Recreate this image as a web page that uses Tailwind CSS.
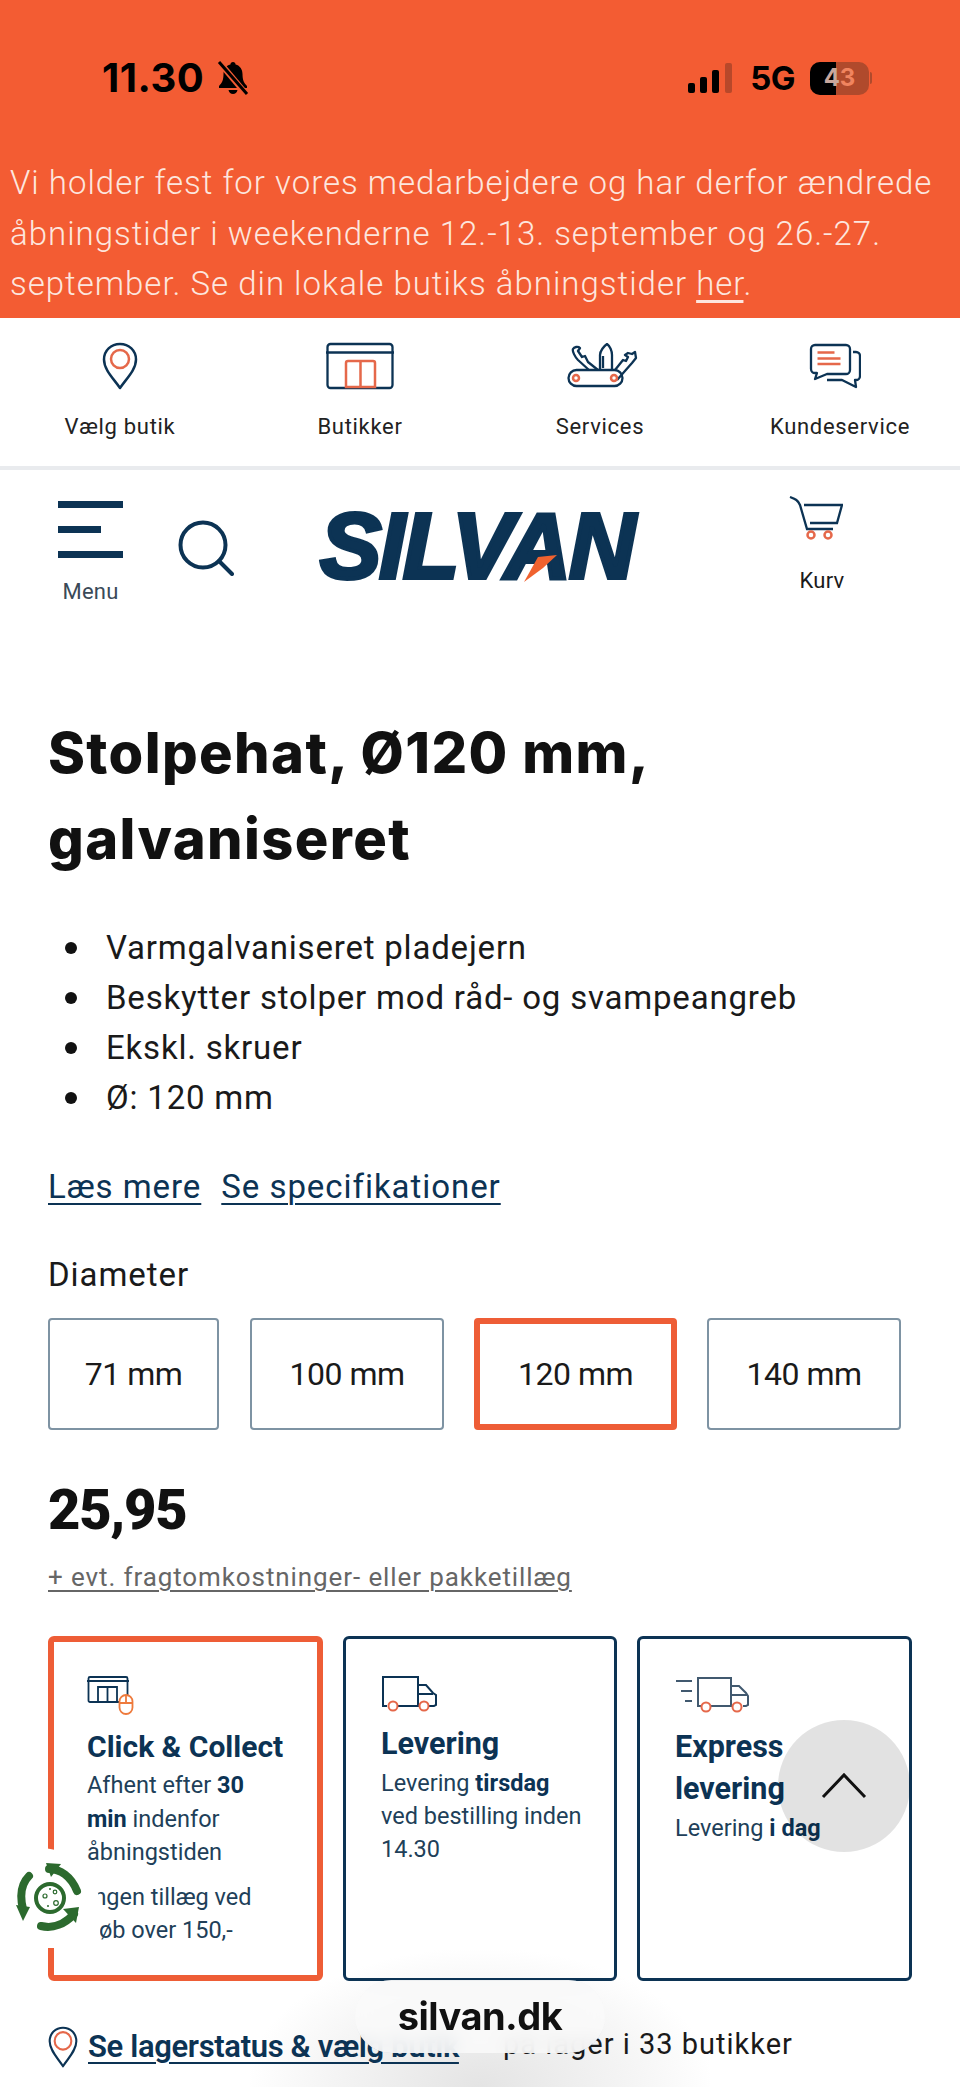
<!DOCTYPE html>
<html lang="da">
<head>
<meta charset="utf-8">
<script src="https://cdn.jsdelivr.net/npm/@tailwindcss/browser@4"></script>
</head>
<body class="bg-white">
<div class="relative w-[960px] h-[2087px] overflow-hidden bg-white font-['Roboto',sans-serif] text-[#1a1a1a]">

  <!-- soft glow behind address pill -->
  <div class="absolute left-[250px] top-[1950px] w-[460px] h-[137px] bg-[radial-gradient(ellipse_at_50%_100%,#e4e4e4_0%,#f4f4f4_45%,#ffffff00_72%)]"></div>

  <!-- orange top -->
  <div class="relative h-[318px] bg-[#f35c33] flex flex-col">
    <div class="mt-[56px] h-[44px] flex items-center pl-[102px] pr-[88px] text-black font-['Inter',sans-serif]">
      <span class="text-[40px] font-bold tracking-[0.5px] leading-none">11.30</span>
      <svg class="ml-[12px]" width="34" height="36" viewBox="0 0 34 36"><path d="M17 2c-1.600 0-2.500 1-2.600 2.400C9.800 5.600 7.500 9.500 7.500 14c0 6-1.500 9-4.500 12v2h28v-2c-3-3-4.500-6-4.500-12 0-4.500-2.300-8.400-6.900-9.600C19.500 3 18.600 2 17 2zM12.500 30c.5 2.500 2.300 4 4.500 4s4-1.500 4.500-4z" fill="#000"/><path d="M4 3l26 31" stroke="#f35c33" stroke-width="6"/><path d="M3 2l28 32" stroke="#000" stroke-width="3"/></svg>
      <div class="ml-auto flex items-center">
        <svg width="44" height="30" viewBox="0 0 44 30"><rect x="0" y="20" width="7" height="10" rx="2" fill="#000"/><rect x="12" y="14" width="7" height="16" rx="2" fill="#000"/><rect x="24" y="7" width="7" height="23" rx="2" fill="#000"/><rect x="37" y="0" width="7" height="30" rx="2" fill="#b8482a"/></svg>
        <span class="ml-[18px] text-[33px] font-bold tracking-[-0.5px] leading-none">5G</span>
        <div class="ml-[15px] relative w-[59px] h-[33px] rounded-[10px] bg-[#b04a2c] overflow-hidden flex items-center justify-center">
          <div class="absolute left-0 top-0 bottom-0 w-[26px] bg-black"></div>
          <span class="relative text-[24px] font-bold leading-none text-[#f0845f]"><span class="text-[#c9a79c]">4</span>3</span>
        </div>
        <div class="ml-[1px] w-[2px] h-[12px] rounded-r bg-[#b04a2c]"></div>
      </div>
    </div>
    <p class="mt-[58px] pl-[10px] text-[33px] font-light leading-[50.5px] tracking-[1px] text-[#fde6de] whitespace-nowrap">Vi holder fest for vores medarbejdere og har derfor ændrede<br>åbningstider i weekenderne 12.-13. september og 26.-27.<br>september. Se din lokale butiks åbningstider <a class="underline underline-offset-[5px]">her</a>.</p>
  </div>

  <!-- service nav -->
  <nav class="relative h-[148px] grid grid-cols-4 text-[22px] text-[#222] tracking-[0.7px] bg-white">
    <a class="flex flex-col items-center pt-[23px]">
      <div class="h-[50px] flex items-center">
        <svg width="36" height="48" viewBox="0 0 36 48" fill="none"><path d="M18 46C12 37 2 28 2 17.500C2 8.500 9 2 18 2s16 6.500 16 15.500C34 28 24 37 18 46z" stroke="#0c3354" stroke-width="2.500" stroke-linejoin="round"/><circle cx="18" cy="17" r="9" stroke="#e5684a" stroke-width="2.500"/></svg>
      </div>
      <span class="mt-[22px] leading-[28px]">Vælg butik</span>
    </a>
    <a class="flex flex-col items-center pt-[23px]">
      <div class="h-[50px] flex items-center">
        <svg width="70" height="48" viewBox="0 0 70 48" fill="none"><rect x="2.500" y="2" width="65" height="44" rx="3" stroke="#0c3354" stroke-width="2.300"/><path d="M1 10.500h68" stroke="#0c3354" stroke-width="2.300"/><path d="M21 45V21a2 2 0 0 1 2-2h25a2 2 0 0 1 2 2v24zM35.500 19v26" stroke="#e5684a" stroke-width="2.500"/></svg>
      </div>
      <span class="mt-[22px] leading-[28px]">Butikker</span>
    </a>
    <a class="flex flex-col items-center pt-[23px]">
      <div class="h-[50px] flex items-center ml-[6px]">
        <svg width="72" height="46" viewBox="0 0 72 46" fill="none" stroke="#0c3354" stroke-width="2.300" stroke-linejoin="round"><rect x="1.500" y="27" width="54" height="16" rx="8"/><path d="M31 27L21 19l-3-6-3 1-4-6 2-3c-2-2-6-1-7 1s2 8 5 11l11 10M33 27V12c0-4 4-9 7-11 3 2 5 7 5 11v15M36 13v12M48 27l8-10 3 1 2-4-3-2 3-2 4 1 3-2 1 6-4 5-15 17"/><circle cx="9" cy="35" r="3" stroke="#e5684a" stroke-width="2.500"/><circle cx="47" cy="35" r="3" stroke="#e5684a" stroke-width="2.500"/></svg>
      </div>
      <span class="mt-[22px] leading-[28px]">Services</span>
    </a>
    <a class="flex flex-col items-center pt-[23px]">
      <div class="h-[50px] flex items-center mr-[10px]">
        <svg width="52" height="46" viewBox="0 0 52 46" fill="none"><path d="M6 2h31a4 4 0 0 1 4 4v21a4 4 0 0 1-4 4H18L6 36l2-6H6a4 4 0 0 1-4-4V6a4 4 0 0 1 4-4z" stroke="#0c3354" stroke-width="2.300" stroke-linejoin="round"/><path d="M44 9h3a4 4 0 0 1 4 4v20a4 4 0 0 1-4 4h-1l1 7-14-7H18" stroke="#0c3354" stroke-width="2.300" stroke-linejoin="round"/><path d="M8.500 9.500h17M8.500 15.500h23M8.500 21h23" stroke="#e5684a" stroke-width="2.300"/></svg>
      </div>
      <span class="mt-[22px] leading-[28px]">Kundeservice</span>
    </a>
  </nav>
  <div class="relative h-[4px] bg-[#e9ebee]"></div>

  <!-- header -->
  <header class="relative h-[240px] flex items-start">
    <div class="ml-[58px] w-[65px] flex flex-col items-center pt-[31px]">
      <div class="w-[65px] flex flex-col gap-[18px]">
        <div class="h-[7px] bg-[#0c3354]"></div>
        <div class="h-[7px] w-[43px] bg-[#0c3354]"></div>
        <div class="h-[7px] bg-[#0c3354]"></div>
      </div>
      <span class="mt-[20px] text-[22px] leading-[28px] text-[#3a4a58] tracking-[0.2px]">Menu</span>
    </div>
    <svg class="ml-[55px] mt-[50px]" width="56" height="56" viewBox="0 0 56 56" fill="none" stroke="#0c3354" stroke-width="4"><circle cx="25" cy="25" r="22.500"/><path d="M41 41l13 13" stroke-linecap="round" stroke-width="4"/></svg>
    <div class="relative ml-[86px] mt-[36px] w-[325px] h-[80px] flex items-center whitespace-nowrap">
      <span class="font-['Liberation_Sans',sans-serif] italic font-bold text-[92px] leading-none tracking-[-2px] text-[#0c3354] [-webkit-text-stroke:4px_#0c3354]">SILVAN</span>
      <svg class="absolute left-[202px] top-[49px]" width="36" height="28" viewBox="0 0 36 28"><path d="M16 2L35 0 21 13 2 27z" fill="#f0622f"/></svg>
    </div>
    <div class="ml-[150px] w-[54px] flex flex-col items-center pt-[26px]">
      <svg class="mr-[12px]" width="54" height="46" viewBox="0 0 54 46" fill="none"><path d="M1 1c5 2 8 3 10 8l7 24h26" stroke="#0c3354" stroke-width="2.300"/><path d="M15 9h38l-5 18H21" stroke="#0c3354" stroke-width="2.300"/><circle cx="22" cy="39" r="3.500" stroke="#e5684a" stroke-width="2.500"/><circle cx="39" cy="39" r="3.500" stroke="#e5684a" stroke-width="2.500"/></svg>
      <span class="mt-[25px] text-[22px] leading-[28px] tracking-[0.2px]">Kurv</span>
    </div>
  </header>

  <!-- main -->
  <main class="relative px-[48px]">
    <h1 class="font-['Inter',sans-serif] font-extrabold text-[56px] leading-[86px] text-[#111] tracking-[1.4px]">Stolpehat, Ø120 mm,<br>galvaniseret</h1>
    <ul class="mt-[41px] text-[33px] leading-[50px] tracking-[0.8px]">
      <li class="flex items-center"><span class="ml-[17px] mr-[29px] w-[12px] h-[12px] rounded-full bg-[#111]"></span>Varmgalvaniseret pladejern</li>
      <li class="flex items-center"><span class="ml-[17px] mr-[29px] w-[12px] h-[12px] rounded-full bg-[#111]"></span>Beskytter stolper mod råd- og svampeangreb</li>
      <li class="flex items-center"><span class="ml-[17px] mr-[29px] w-[12px] h-[12px] rounded-full bg-[#111]"></span>Ekskl. skruer</li>
      <li class="flex items-center"><span class="ml-[17px] mr-[29px] w-[12px] h-[12px] rounded-full bg-[#111]"></span>Ø: 120 mm</li>
    </ul>
    <div class="mt-[39px] flex gap-[20px] text-[33px] leading-[50px] tracking-[0.95px] text-[#0c3354]">
      <a class="underline underline-offset-[5px] decoration-2">Læs mere</a>
      <a class="underline underline-offset-[5px] decoration-2">Se specifikationer</a>
    </div>
    <div class="mt-[38px] text-[33px] leading-[50px] tracking-[0.95px]">Diameter</div>
    <div class="mt-[18px] flex text-[32px] tracking-[-0.5px]">
      <button class="w-[171px] h-[112px] border-2 border-[#7e93a3] rounded-[4px]">71 mm</button>
      <button class="ml-[31px] w-[194px] h-[112px] border-2 border-[#7e93a3] rounded-[4px]">100 mm</button>
      <button class="ml-[30px] w-[203px] h-[112px] border-[6px] border-[#ee5d36] rounded-[4px]">120 mm</button>
      <button class="ml-[30px] w-[194px] h-[112px] border-2 border-[#7e93a3] rounded-[4px]">140 mm</button>
    </div>
    <div class="mt-[50px] font-black text-[56px] leading-[60px] text-[#111] tracking-[-1.3px]">25,95</div>
    <a class="block mt-[17px] text-[26px] leading-[40px] tracking-[0.9px] text-[#666] underline underline-offset-[4px] decoration-2">+ evt. fragtomkostninger- eller pakketillæg</a>

    <div class="mt-[39px] flex gap-[20px] h-[345px] text-[#0c3354]">
      <div class="w-[275px] shrink-0 border-[6px] border-[#ee5d36] rounded-[6px] pl-[33px] pt-[33px]">
        <svg width="48" height="40" viewBox="0 0 48 40" fill="none"><rect x="1.500" y="2" width="39" height="25" rx="1.500" stroke="#0c3354" stroke-width="1.800"/><path d="M0 6h42" stroke="#0c3354" stroke-width="1.800"/><path d="M11 27V12h19v15M20.500 12v15" stroke="#0c3354" stroke-width="1.800"/><rect x="32.500" y="20" width="13" height="19" rx="6.500" fill="#fff" stroke="#ee7a3c" stroke-width="1.800"/><path d="M32.500 28h13M39 20v8" stroke="#ee7a3c" stroke-width="1.800"/></svg>
        <div class="mt-[12px] font-bold text-[30px] leading-[40px]">Click &amp; Collect</div>
        <p class="mt-[2px] text-[23.500px] leading-[33.500px] text-[#213f59]">Afhent efter <b class="text-[#0c3354]">30</b><br><b class="text-[#0c3354]">min</b> indenfor<br>åbningstiden</p>
        <p class="mt-[11px] text-[23.500px] leading-[33px] text-[#213f59]">Ingen tillæg ved<br>køb over 150,-</p>
      </div>
      <div class="w-[274px] shrink-0 border-[3px] border-[#0c3354] rounded-[6px] pl-[35px] pt-[36px]">
        <svg width="56" height="38" viewBox="0 0 56 38" fill="none"><path d="M6 31H2V2h35v29H16M24 31h13" stroke="#0c3354" stroke-width="2"/><path d="M37 10h8l7 8 3 2v10l-2 1h-6M37 19h15" stroke="#0c3354" stroke-width="2"/><circle cx="12" cy="31" r="4.500" stroke="#e5684a" stroke-width="2"/><circle cx="43" cy="31" r="4.500" stroke="#e5684a" stroke-width="2"/></svg>
        <div class="mt-[11px] font-bold text-[30.500px] leading-[40px]">Levering</div>
        <p class="mt-[3px] text-[23.500px] leading-[33px] text-[#213f59]">Levering <b class="text-[#0c3354]">tirsdag</b><br>ved bestilling inden<br>14.30</p>
      </div>
      <div class="w-[275px] shrink-0 border-[3px] border-[#0c3354] rounded-[6px] pl-[35px] pt-[38px]">
        <svg width="74" height="36" viewBox="0 0 74 36" fill="none"><path d="M1 4h16M6 14h11M10 24h7" stroke="#41596f" stroke-width="2"/><path d="M26 29h-3V1h33v28H36M56 9h8l7 7 2 3v9l-2 1h-3M56 18h16" stroke="#41596f" stroke-width="2"/><circle cx="31" cy="30" r="4.500" stroke="#e5684a" stroke-width="2"/><circle cx="62" cy="30" r="4.500" stroke="#e5684a" stroke-width="2"/></svg>
        <div class="mt-[13px] font-bold text-[30.500px] leading-[42px]">Express<br>levering</div>
        <p class="mt-[2px] text-[23.500px] leading-[33px] text-[#213f59]">Levering <b class="text-[#0c3354]">i dag</b></p>
      </div>
    </div>

    <div class="mt-[44px] flex items-center text-[31px] leading-[44px] whitespace-nowrap">
      <svg width="30" height="42" viewBox="0 0 36 48" fill="none" preserveAspectRatio="none"><path d="M18 46C12 37 2 28 2 17.500C2 8.500 9 2 18 2s16 6.500 16 15.500C34 28 24 37 18 46z" stroke="#0c3354" stroke-width="2.500" stroke-linejoin="round"/><circle cx="18" cy="17" r="10" stroke="#e5684a" stroke-width="2.500"/></svg>
      <a class="ml-[10px] w-[372px] font-semibold tracking-[-0.35px] text-[#0c3354] underline underline-offset-[5px] decoration-2">Se lagerstatus &amp; vælg butik</a>
      <span class="ml-[43px] -mt-[6px] text-[29px] tracking-[1px]">på lager i 33 butikker</span>
    </div>
  </main>

  <!-- floating: scroll to top -->
  <div class="absolute left-[778px] top-[1720px] w-[132px] h-[132px] rounded-full bg-black/[0.115] flex items-center justify-center">
    <svg width="46" height="28" viewBox="0 0 46 28" fill="none"><path d="M2 25L23 3l21 22" stroke="#111" stroke-width="3"/></svg>
  </div>

  <!-- floating: green badge -->
  <div class="absolute left-0 top-[1848px] w-[100px] h-[100px] rounded-tr-[60px] rounded-br-[12px] bg-white flex items-center justify-center">
    <svg width="68" height="70" viewBox="0 0 68 70" fill="none">
      <circle cx="34" cy="35" r="14" stroke="#2c6a2e" stroke-width="4"/>
      <circle cx="29" cy="33" r="2" stroke="#2c6a2e" stroke-width="1.200"/><circle cx="39" cy="29" r="1.800" stroke="#2c6a2e" stroke-width="1.200"/><circle cx="40" cy="40" r="2.300" stroke="#2c6a2e" stroke-width="1.200"/><circle cx="32" cy="43" r="1" fill="#2c6a2e"/><circle cx="34" cy="26" r="1" fill="#2c6a2e"/>
      <path d="M33 6c11 0 22 7 28 22" stroke="#2c6a2e" stroke-width="8" stroke-linecap="round"/><path d="M30 0l15 1-10 13z" fill="#2c6a2e"/>
      <path d="M13 13C6 20 3 30 7 46" stroke="#2c6a2e" stroke-width="8" stroke-linecap="round"/><path d="M0 42l14 2-7 14z" fill="#2c6a2e"/>
      <path d="M25 63c12 3 24-2 33-12" stroke="#2c6a2e" stroke-width="8" stroke-linecap="round"/><path d="M47 46l16-2-3 16z" fill="#2c6a2e"/>
    </svg>
  </div>

  <!-- floating: address pill -->
  <div class="absolute left-[355px] top-[1980px] w-[250px] h-[73px] rounded-full bg-[#fafafa]/90 backdrop-blur-sm flex items-center justify-center font-['Inter',sans-serif] font-bold text-[38px] text-[#111] tracking-[-0.5px]">silvan.dk</div>
</div>
</body>
</html>
